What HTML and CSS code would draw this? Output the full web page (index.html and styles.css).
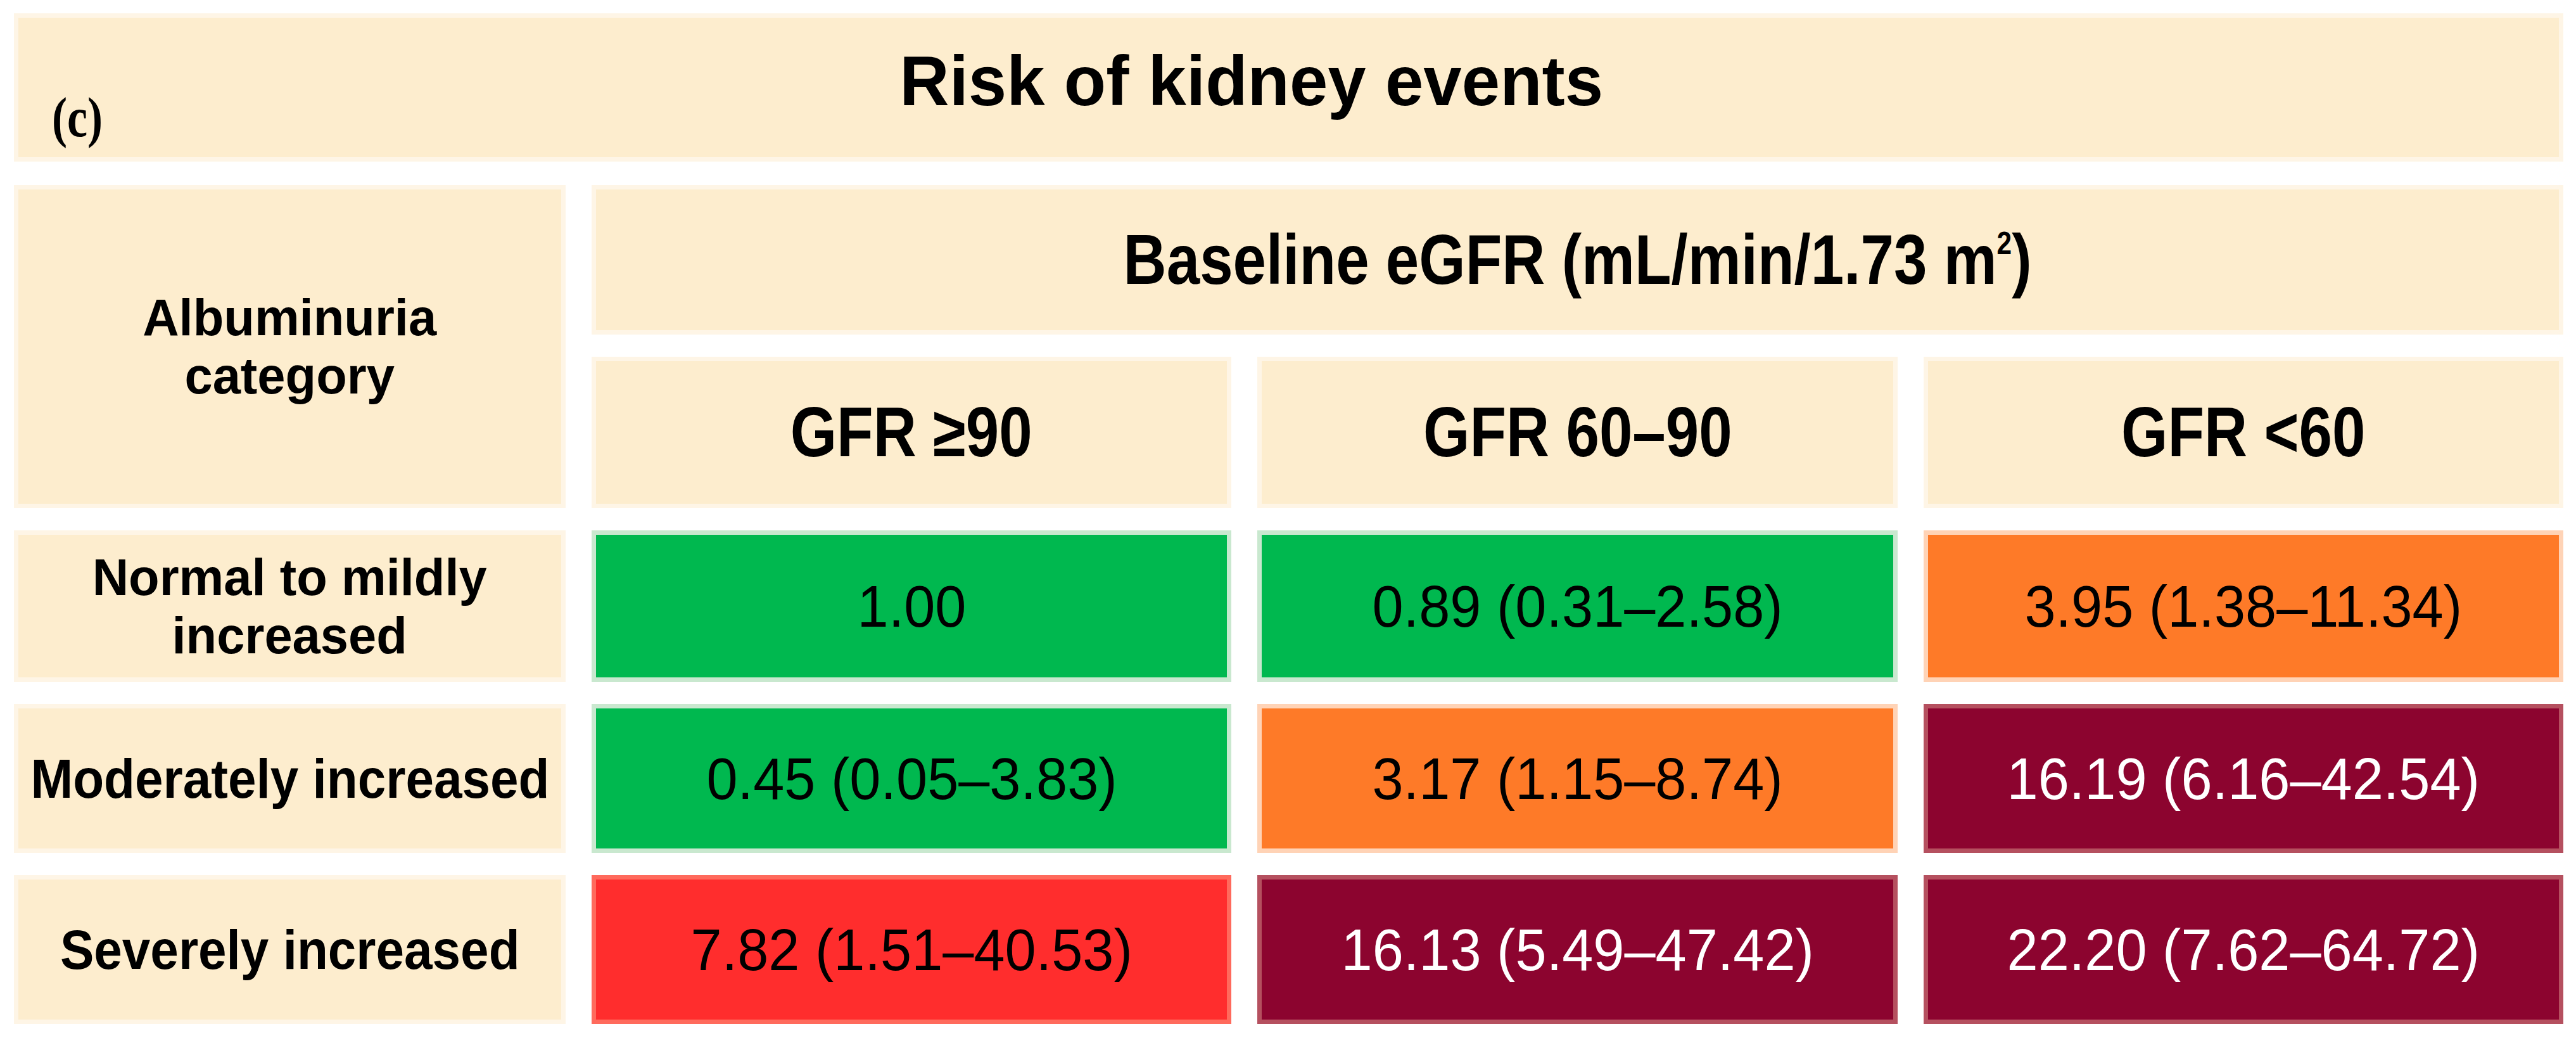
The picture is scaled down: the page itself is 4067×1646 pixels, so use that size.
FILE: index.html
```html
<!DOCTYPE html>
<html lang="en">
<head>
<meta charset="utf-8">
<title>Risk of kidney events</title>
<link rel="stylesheet" href="styles.css">
</head>
<body>
<div class="page">
  <div class="title-bar">
    <span class="title">Risk of kidney events</span>
    <span class="panel-tag">(c)</span>
  </div>
  <div class="grid">
    <div class="cell cream corner"><span class="lbl two">Albuminuria<br>category</span></div>
    <div class="cell cream span3"><span class="hdr">Baseline eGFR (mL/min/1.73 m<sup class="sup">2</sup>)</span></div>
    <div class="cell cream"><span class="hdr">GFR ≥90</span></div>
    <div class="cell cream"><span class="hdr">GFR 60–90</span></div>
    <div class="cell cream"><span class="hdr">GFR &lt;60</span></div>

    <div class="cell cream"><span class="lbl two">Normal to mildly<br>increased</span></div>
    <div class="cell green"><span class="val">1.00</span></div>
    <div class="cell green"><span class="val">0.89 (0.31–2.58)</span></div>
    <div class="cell orange"><span class="val">3.95 (1.38–11.34)</span></div>

    <div class="cell cream"><span class="lbl">Moderately increased</span></div>
    <div class="cell green"><span class="val">0.45 (0.05–3.83)</span></div>
    <div class="cell orange"><span class="val">3.17 (1.15–8.74)</span></div>
    <div class="cell maroon"><span class="val">16.19 (6.16–42.54)</span></div>

    <div class="cell cream"><span class="lbl">Severely increased</span></div>
    <div class="cell red"><span class="val">7.82 (1.51–40.53)</span></div>
    <div class="cell maroon"><span class="val">16.13 (5.49–47.42)</span></div>
    <div class="cell maroon"><span class="val">22.20 (7.62–64.72)</span></div>
  </div>
</div>
</body>
</html>
```

FILE: styles.css
```css
html, body {
  margin: 0;
  padding: 0;
  background: #ffffff;
}

.page {
  width: 4067px;
  height: 1646px;
  box-sizing: border-box;
  padding: 21px 20px 0 22px;
  font-family: "Liberation Sans", Arial, sans-serif;
  color: #000;
}

.title-bar {
  position: relative;
  box-sizing: border-box;
  height: 234px;
  margin-bottom: 37px;
  padding: 44px 118px 0 0;
  background: #FDEDCE;
  border: 7px solid #FEF5E6;
  text-align: center;
  white-space: nowrap;
}

.title {
  display: inline-block;
  font-weight: 700;
  font-size: 112px;
  line-height: 112px;
  transform: scaleX(0.97);
}

.panel-tag {
  position: absolute;
  left: 53px;
  top: 114px;
  font-family: "Liberation Serif", "Times New Roman", serif;
  font-weight: 700;
  font-size: 88px;
  line-height: 88px;
  transform: scaleX(0.82);
  transform-origin: left center;
}

.grid {
  display: grid;
  grid-template-columns: 871px repeat(3, 1fr);
  grid-template-rows: 236px 239px 239px 235px 235px;
  column-gap: 41px;
  row-gap: 35px;
}

.cell {
  box-sizing: border-box;
  border: 7px solid;
  display: flex;
  align-items: center;
  justify-content: center;
  text-align: center;
  white-space: nowrap;
}

.corner {
  grid-row: span 2;
}

.span3 {
  grid-column: span 3;
}

.cream {
  background: #FDEDCE;
  border-color: #FEF5E6;
}

.green {
  background: #00B84F;
  border-color: #C9E8CF;
}

.orange {
  background: #FE7A28;
  border-color: #FFD3B6;
}

.red {
  background: #FF2D2D;
  border-color: #FF6A5C;
}

.maroon {
  background: #8C042F;
  border-color: #B5505F;
  color: #ffffff;
}

.hdr {
  display: inline-block;
  font-weight: 700;
  font-size: 111px;
  line-height: 111px;
  transform: scaleX(0.85);
}

.sup {
  font-size: 0.45em;
  line-height: 0;
  vertical-align: 0.95em;
}

.lbl {
  display: inline-block;
  font-weight: 700;
  font-size: 88px;
  line-height: 100px;
  transform: scaleX(0.91);
}

.lbl.two {
  font-size: 82px;
  line-height: 92px;
  transform: scaleX(0.97);
}

.val {
  display: inline-block;
  font-weight: 400;
  font-size: 92px;
  line-height: 92px;
  transform: scaleX(0.96);
}
```
